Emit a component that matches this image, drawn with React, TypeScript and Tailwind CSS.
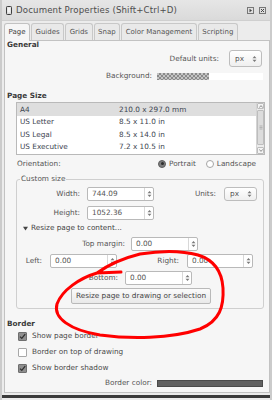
import React from "react";

const TABS = ["Page", "Guides", "Grids", "Snap", "Color Management", "Scripting"];

const PAPERS = [
  { name: "A4", size: "210.0 x 297.0 mm" },
  { name: "US Letter", size: "8.5 x 11.0 in" },
  { name: "US Legal", size: "8.5 x 14.0 in" },
  { name: "US Executive", size: "7.2 x 10.5 in" },
];

function Arrows() {
  return (
    <svg width="5" height="8" viewBox="0 0 5 8" className="shrink-0">
      <path d="M0.5 3.2 L2.5 1 L4.5 3.2 Z" fill="#7a7a7a" />
      <path d="M0.5 4.8 L2.5 7 L4.5 4.8 Z" fill="#7a7a7a" />
    </svg>
  );
}

function Spin({ value, className }: { value: string; className: string }) {
  return (
    <div className={`flex h-[14px] items-stretch rounded-[2px] border border-[#b9b9b9] bg-white ${className}`}>
      <span className="flex flex-1 items-center pl-[4px] text-[#555]">{value}</span>
      <span className="flex w-[9px] items-center justify-center border-l border-[#d8d8d8]">
        <Arrows />
      </span>
    </div>
  );
}

function UnitSelect({ className }: { className: string }) {
  return (
    <div
      className={`flex items-center justify-between rounded-[3px] border border-[#bdbdbd] bg-gradient-to-b from-white to-[#efefef] pl-[5px] pr-[4px] text-[#555] ${className}`}
    >
      <span>px</span>
      <Arrows />
    </div>
  );
}

function Check({ checked, label }: { checked: boolean; label: string }) {
  return (
    <div className="flex h-[16px] items-center pl-[13px]">
      {checked ? (
        <span className="flex h-[9px] w-[9px] items-center justify-center rounded-[1px] border border-[#6f6f6f] bg-[#8e8e8e]">
          <svg width="7" height="7" viewBox="0 0 7 7">
            <path d="M1 3.6 L2.8 5.4 L6.2 1.2" fill="none" stroke="#2f2f2f" strokeWidth="1.3" />
          </svg>
        </span>
      ) : (
        <span className="h-[9px] w-[9px] rounded-[1px] border border-[#a8a8a8] bg-white" />
      )}
      <span className="ml-[5px] text-[#4a4a4a]">{label}</span>
    </div>
  );
}

export default function App() {
  return (
    <div className="relative flex h-[400px] w-[272px] flex-col overflow-hidden border-x-[2px] border-[#cbcbcb] bg-[#ececec] font-['DejaVu_Sans',sans-serif] text-[7.3px] leading-none text-[#4a4a4a]">
      {/* Title bar */}
      <div className="flex h-[21px] shrink-0 items-center border-b border-[#cfcfcf] bg-gradient-to-b from-[#e6e6e6] to-[#dadada] pl-[4px] pr-[4px]">
        <svg width="6" height="9" viewBox="0 0 6 9" className="shrink-0">
          <rect x="0.5" y="0.5" width="5" height="8" rx="0.8" fill="#d9d9d9" stroke="#3f3f3f" />
          <rect x="1.5" y="1.5" width="3" height="5" fill="#f3f3f3" />
        </svg>
        <span className="ml-[4px] text-[8.6px] tracking-[0.15px] text-[#4d4d4d]">Document Properties (Shift+Ctrl+D)</span>
        <div className="ml-auto flex items-center gap-[5px]">
          <svg width="7" height="7" viewBox="0 0 7 7">
            <rect x="0.5" y="0.5" width="6" height="6" fill="none" stroke="#777" />
            <path d="M2.5 1.8 L5 3.5 L2.5 5.2 Z" fill="#444" />
          </svg>
          <svg width="7" height="7" viewBox="0 0 7 7">
            <rect x="0.5" y="0.5" width="6" height="6" fill="none" stroke="#777" />
            <path d="M2 2 L5 5 M5 2 L2 5" stroke="#444" strokeWidth="1" />
          </svg>
        </div>
      </div>

      {/* Tabs */}
      <div className="relative z-10 mt-[2px] flex h-[17px] shrink-0 items-end gap-[1px] pl-[2px] text-[7px]">
        {TABS.map((t, i) => (
          <div
            key={t}
            className={
              i === 0
                ? "-mb-px flex h-[18px] items-center rounded-t-[3px] border-x border-t border-[#c2c2c2] bg-[#f6f6f6] px-[3.5px] text-[#3f3f3f]"
                : "flex h-[17px] items-center rounded-t-[3px] border-x border-t border-[#c8c8c8] bg-[#e9e9e9] px-[3.5px] text-[#555]"
            }
          >
            {t}
          </div>
        ))}
      </div>

      {/* Panel */}
      <div className="ml-[2px] flex w-[266px] shrink-0 flex-col border border-[#c2c2c2] bg-[#f6f6f6]">
        <div className="flex h-[8px] items-center pl-[2px] font-bold text-[#3a3a3a]">General</div>

        <div className="mt-[1px] flex h-[17px] items-center justify-end pr-[7px]">
          <span className="text-[#555]">Default units:</span>
          <UnitSelect className="ml-[10px] h-[17px] w-[33px]" />
        </div>

        <div className="mt-[5px] flex h-[8px] items-center justify-end pr-[6px]">
          <span className="text-[#555]">Background:</span>
          <div className="ml-[5px] flex h-[7px] w-[106px]">
            <div className="h-full w-[52px] bg-[repeating-conic-gradient(#8a8a8a_0%_25%,#c4c4c4_0%_50%)] bg-[length:4px_4px]" />
            <div className="h-full flex-1 bg-white" />
          </div>
        </div>

        <div className="mt-[12px] flex h-[8px] items-center pl-[2px] font-bold text-[#3a3a3a]">Page Size</div>

        <div className="ml-[11px] mt-[2px] flex h-[53px] w-[249px] border border-[#b9b9b9] bg-white">
          <div className="flex flex-1 flex-col">
            {PAPERS.map((p, i) => (
              <div
                key={p.name}
                className={`flex h-[12.5px] items-center pl-[3px] text-[#3d4550] ${i === 0 ? "bg-[#dedede]" : ""}`}
              >
                <span className="w-[99px]">{p.name}</span>
                <span>{p.size}</span>
              </div>
            ))}
          </div>
          <div className="flex w-[8px] flex-col border-l border-[#d4d4d4] bg-[#ececec]">
            <div className="flex h-[6px] items-center justify-center rounded-[1px] border border-[#bdbdbd] bg-[#f4f4f4]">
              <svg width="4" height="3" viewBox="0 0 4 3">
                <path d="M0.3 2.6 L2 0.6 L3.7 2.6" fill="none" stroke="#777" strokeWidth="0.8" />
              </svg>
            </div>
            <div className="mt-[1px] flex flex-1 items-center justify-center rounded-[1px] border border-[#bdbdbd] bg-[#dcdcdc]">
              <svg width="4" height="5" viewBox="0 0 4 5">
                <path d="M0.5 1 H3.5 M0.5 2.5 H3.5 M0.5 4 H3.5" stroke="#999" strokeWidth="0.6" />
              </svg>
            </div>
            <div className="mt-[2px] flex h-[7px] items-center justify-center rounded-[1px] border border-[#bdbdbd] bg-[#f4f4f4]">
              <svg width="4" height="3" viewBox="0 0 4 3">
                <path d="M0.3 0.4 L2 2.4 L3.7 0.4" fill="none" stroke="#777" strokeWidth="0.8" />
              </svg>
            </div>
          </div>
        </div>

        <div className="mt-[3px] flex h-[11px] items-center pl-[12px]">
          <span className="w-[141px] text-[#555]">Orientation:</span>
          <span className="flex h-[8px] w-[8px] items-center justify-center rounded-full border border-[#5e5e5e] bg-[#7d7d7d]">
            <span className="h-[3px] w-[3px] rounded-full bg-[#2e2e2e]" />
          </span>
          <span className="ml-[3px] text-[#555]">Portrait</span>
          <span className="ml-[10px] h-[8px] w-[8px] rounded-full border border-[#a5a5a5] bg-white" />
          <span className="ml-[3px] text-[#555]">Landscape</span>
        </div>

        {/* Custom size */}
        <fieldset className="ml-[11px] mt-[6px] w-[248px] rounded-[3px] border border-[#cfcfcf] px-0 pb-[4px]">
          <legend className="ml-[3px] h-[8px] px-[1px] leading-[8px] text-[#555]">Custom size</legend>
          <div className="flex flex-col pt-[4px]">
            <div className="flex h-[14px] items-center">
              <span className="w-[63px] text-right text-[#555]">Width:</span>
              <Spin value="744.09" className="ml-[7px] w-[67px]" />
              <span className="w-[62px] text-right text-[#555]">Units:</span>
              <UnitSelect className="ml-[8px] h-[14px] w-[33px]" />
            </div>
            <div className="mt-[5px] flex h-[14px] items-center">
              <span className="w-[63px] text-right text-[#555]">Height:</span>
              <Spin value="1052.36" className="ml-[7px] w-[67px]" />
            </div>
            <div className="mt-[2px] flex h-[12px] items-center pl-[6px] text-[#444]">
              <svg width="5" height="5" viewBox="0 0 5 5" className="shrink-0">
                <path d="M0 0.8 H5 L2.5 4.6 Z" fill="#444" />
              </svg>
              <span className="ml-[3px]">Resize page to content...</span>
            </div>
            <div className="mt-[3px] flex h-[14px] items-center">
              <span className="w-[108px] text-right text-[#555]">Top margin:</span>
              <Spin value="0.00" className="ml-[6px] w-[67px]" />
            </div>
            <div className="mt-[3px] flex h-[14px] items-center">
              <span className="w-[25px] text-right text-[#555]">Left:</span>
              <Spin value="0.00" className="ml-[8px] w-[67px]" />
              <span className="w-[62px] text-right text-[#555]">Right:</span>
              <Spin value="0.00" className="ml-[8px] w-[66px]" />
            </div>
            <div className="mt-[3px] flex h-[14px] items-center">
              <span className="w-[101px] text-right text-[#555]">Bottom:</span>
              <Spin value="0.00" className="ml-[7px] w-[67px]" />
            </div>
            <div className="mt-[3px] flex h-[16px] items-center pl-[54px]">
              <div className="flex h-[16px] w-[140px] items-center justify-center rounded-[2px] border border-[#b9b9b9] bg-gradient-to-b from-[#fbfbfb] to-[#e9e9e9] text-[#444]">
                Resize page to drawing or selection
              </div>
            </div>
          </div>
        </fieldset>

        <div className="mt-[11px] flex h-[8px] items-center pl-[2px] font-bold text-[#3a3a3a]">Border</div>
        <Check checked label="Show page border" />
        <Check checked={false} label="Border on top of drawing" />
        <Check checked label="Show border shadow" />

        <div className="mt-[3px] flex h-[8px] items-center justify-end pr-[6px]">
          <span className="text-[#555]">Border color:</span>
          <div className="ml-[5px] h-[7px] w-[106px] border border-[#4a4a4a] bg-[#606060]" />
        </div>
        <div className="h-[5px]" />
      </div>

      <div className="mt-[2px] h-[3px] shrink-0 bg-[#3b3b3b]" />

      {/* Hand-drawn red annotation */}
      <svg
        className="pointer-events-none absolute left-[-2px] top-0"
        width="272"
        height="400"
        viewBox="0 0 272 400"
      >
        <path
          d="M121 272 L97 273 C80 278 62 290 57 304 C53 318 70 330 100 335 C130 339 170 339 200 329 C220 321 224 306 223 288 C222 272 214 260 198 255 C180 250 158 251 140 254 C124 258 108 265 97 273"
          fill="none"
          stroke="#ff0000"
          strokeWidth="3"
          strokeLinecap="round"
          strokeLinejoin="round"
        />
      </svg>
    </div>
  );
}
